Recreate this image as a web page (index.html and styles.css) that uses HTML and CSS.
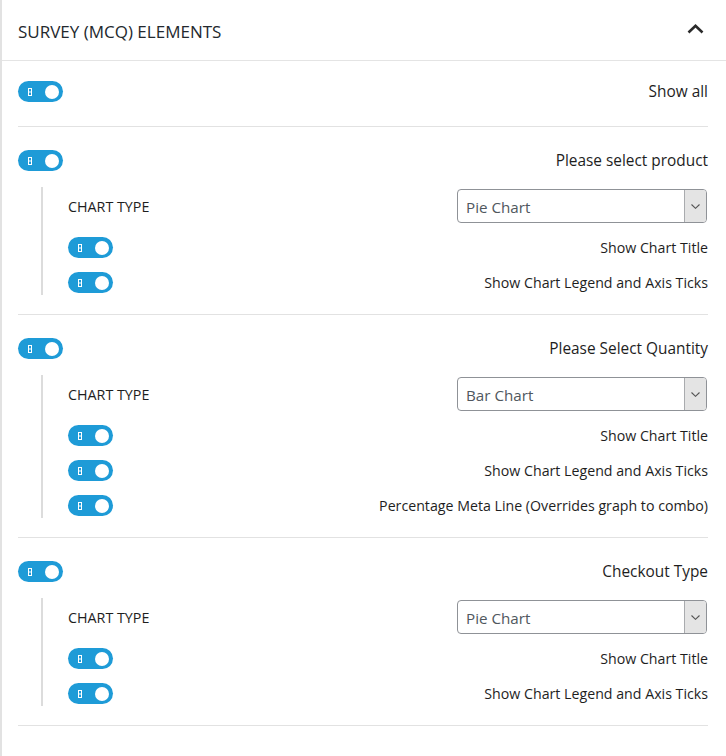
FILE: index.html
```html
<!DOCTYPE html>
<html>
<head>
<meta charset="utf-8">
<link rel="stylesheet" href="styles.css">
</head>
<body>
<div class="panel">
  <div class="panel-header">
    <span class="panel-title">SURVEY (MCQ) ELEMENTS</span>
    <svg class="chevron" width="17" height="10" viewBox="0 0 17 10"><path d="M1.5 8.5 L8.5 1.8 L15.5 8.5" fill="none" stroke="#2b2b2b" stroke-width="2.6"/></svg>
  </div>
  <div class="panel-body">
    <div class="section section-first">
      <div class="row">
        <span class="toggle"><svg class="tmark" width="4" height="8" viewBox="0 0 4 8"><rect x="0.5" y="0.5" width="3" height="7" fill="none" stroke="#fff" stroke-width="1"/><line x1="0" y1="4" x2="4" y2="4" stroke="#fff" stroke-width="1"/></svg><span class="knob"></span></span>
        <span class="label main">Show all</span>
      </div>
    </div>

    <div class="section">
      <div class="row">
        <span class="toggle"><svg class="tmark" width="4" height="8" viewBox="0 0 4 8"><rect x="0.5" y="0.5" width="3" height="7" fill="none" stroke="#fff" stroke-width="1"/><line x1="0" y1="4" x2="4" y2="4" stroke="#fff" stroke-width="1"/></svg><span class="knob"></span></span>
        <span class="label main">Please select product</span>
      </div>
      <div class="nested">
        <div class="row select-row">
          <span class="caps">CHART TYPE</span>
          <div class="select"><span class="select-text">Pie Chart</span><span class="select-arrow"><svg width="9" height="5" viewBox="0 0 9 5"><path d="M0.5 0.5 L4.5 4.3 L8.5 0.5" fill="none" stroke="#555" stroke-width="1.1"/></svg></span></div>
        </div>
        <div class="row">
          <span class="toggle"><svg class="tmark" width="4" height="8" viewBox="0 0 4 8"><rect x="0.5" y="0.5" width="3" height="7" fill="none" stroke="#fff" stroke-width="1"/><line x1="0" y1="4" x2="4" y2="4" stroke="#fff" stroke-width="1"/></svg><span class="knob"></span></span>
          <span class="label">Show Chart Title</span>
        </div>
        <div class="row">
          <span class="toggle"><svg class="tmark" width="4" height="8" viewBox="0 0 4 8"><rect x="0.5" y="0.5" width="3" height="7" fill="none" stroke="#fff" stroke-width="1"/><line x1="0" y1="4" x2="4" y2="4" stroke="#fff" stroke-width="1"/></svg><span class="knob"></span></span>
          <span class="label">Show Chart Legend and Axis Ticks</span>
        </div>
      </div>
    </div>

    <div class="section">
      <div class="row">
        <span class="toggle"><svg class="tmark" width="4" height="8" viewBox="0 0 4 8"><rect x="0.5" y="0.5" width="3" height="7" fill="none" stroke="#fff" stroke-width="1"/><line x1="0" y1="4" x2="4" y2="4" stroke="#fff" stroke-width="1"/></svg><span class="knob"></span></span>
        <span class="label main">Please Select Quantity</span>
      </div>
      <div class="nested">
        <div class="row select-row">
          <span class="caps">CHART TYPE</span>
          <div class="select"><span class="select-text">Bar Chart</span><span class="select-arrow"><svg width="9" height="5" viewBox="0 0 9 5"><path d="M0.5 0.5 L4.5 4.3 L8.5 0.5" fill="none" stroke="#555" stroke-width="1.1"/></svg></span></div>
        </div>
        <div class="row">
          <span class="toggle"><svg class="tmark" width="4" height="8" viewBox="0 0 4 8"><rect x="0.5" y="0.5" width="3" height="7" fill="none" stroke="#fff" stroke-width="1"/><line x1="0" y1="4" x2="4" y2="4" stroke="#fff" stroke-width="1"/></svg><span class="knob"></span></span>
          <span class="label">Show Chart Title</span>
        </div>
        <div class="row">
          <span class="toggle"><svg class="tmark" width="4" height="8" viewBox="0 0 4 8"><rect x="0.5" y="0.5" width="3" height="7" fill="none" stroke="#fff" stroke-width="1"/><line x1="0" y1="4" x2="4" y2="4" stroke="#fff" stroke-width="1"/></svg><span class="knob"></span></span>
          <span class="label">Show Chart Legend and Axis Ticks</span>
        </div>
        <div class="row">
          <span class="toggle"><svg class="tmark" width="4" height="8" viewBox="0 0 4 8"><rect x="0.5" y="0.5" width="3" height="7" fill="none" stroke="#fff" stroke-width="1"/><line x1="0" y1="4" x2="4" y2="4" stroke="#fff" stroke-width="1"/></svg><span class="knob"></span></span>
          <span class="label">Percentage Meta Line (Overrides graph to combo)</span>
        </div>
      </div>
    </div>

    <div class="section">
      <div class="row">
        <span class="toggle"><svg class="tmark" width="4" height="8" viewBox="0 0 4 8"><rect x="0.5" y="0.5" width="3" height="7" fill="none" stroke="#fff" stroke-width="1"/><line x1="0" y1="4" x2="4" y2="4" stroke="#fff" stroke-width="1"/></svg><span class="knob"></span></span>
        <span class="label main">Checkout Type</span>
      </div>
      <div class="nested">
        <div class="row select-row">
          <span class="caps">CHART TYPE</span>
          <div class="select"><span class="select-text">Pie Chart</span><span class="select-arrow"><svg width="9" height="5" viewBox="0 0 9 5"><path d="M0.5 0.5 L4.5 4.3 L8.5 0.5" fill="none" stroke="#555" stroke-width="1.1"/></svg></span></div>
        </div>
        <div class="row">
          <span class="toggle"><svg class="tmark" width="4" height="8" viewBox="0 0 4 8"><rect x="0.5" y="0.5" width="3" height="7" fill="none" stroke="#fff" stroke-width="1"/><line x1="0" y1="4" x2="4" y2="4" stroke="#fff" stroke-width="1"/></svg><span class="knob"></span></span>
          <span class="label">Show Chart Title</span>
        </div>
        <div class="row">
          <span class="toggle"><svg class="tmark" width="4" height="8" viewBox="0 0 4 8"><rect x="0.5" y="0.5" width="3" height="7" fill="none" stroke="#fff" stroke-width="1"/><line x1="0" y1="4" x2="4" y2="4" stroke="#fff" stroke-width="1"/></svg><span class="knob"></span></span>
          <span class="label">Show Chart Legend and Axis Ticks</span>
        </div>
      </div>
    </div>
  </div>
</div>
</body>
</html>
```

FILE: styles.css
```css
html, body {
  margin: 0;
  padding: 0;
  background: #fff;
}
body {
  font-family: "Open Sans", "Noto Sans", sans-serif;
  font-size: 14.2px;
  color: #1e1e1e;
}
.panel {
  min-height: 756px;
  border-left: 2px solid #e2e2e2;
  box-sizing: border-box;
}
.panel-header {
  height: 60px;
  border-bottom: 1px solid #e4e4e4;
  display: flex;
  align-items: center;
  justify-content: space-between;
  padding: 0 22px 0 16px;
}
.panel-title {
  font-size: 17px;
  color: #23282d;
  margin-top: 2px;
}
.chevron {
  display: block;
  margin-top: -2px;
}
.panel-body {
  padding: 0 18px 0 16px;
}
.section {
  padding: 23px 0 19px;
  border-bottom: 1px solid #e2e2e2;
}
.section-first {
  padding: 20px 0 24px;
}
.row {
  display: flex;
  align-items: center;
  justify-content: space-between;
  height: 21px;
}
.toggle {
  position: relative;
  width: 45px;
  height: 21px;
  border-radius: 11px;
  background: #1e9bd7;
  flex: none;
}
.tmark {
  position: absolute;
  left: 10px;
  top: 6.5px;
}
.knob {
  position: absolute;
  right: 4px;
  top: 3.5px;
  width: 14px;
  height: 14px;
  border-radius: 50%;
  background: #fff;
}
.label {
  white-space: nowrap;
}
.main {
  font-size: 15.4px;
}
.nested {
  margin: 16px 0 0 23px;
  border-left: 2px solid #dcdcdc;
  padding: 2px 0 2px 25px;
  display: flex;
  flex-direction: column;
  gap: 14px;
}
.select-row {
  height: 34px;
}
.caps {
  text-transform: uppercase;
  font-size: 14.3px;
}
.select {
  width: 250px;
  height: 34px;
  box-sizing: border-box;
  border: 1px solid #8f9297;
  border-radius: 4px;
  display: flex;
  overflow: hidden;
  margin-right: 1px;
}
.select-text {
  flex: 1;
  padding: 2px 0 0 8px;
  line-height: 30px;
  font-size: 15.2px;
  color: #50575e;
}
.select-arrow {
  width: 21px;
  background: #e4e4e4;
  border-left: 1px solid #a9abae;
  display: flex;
  align-items: center;
  justify-content: center;
}
```
